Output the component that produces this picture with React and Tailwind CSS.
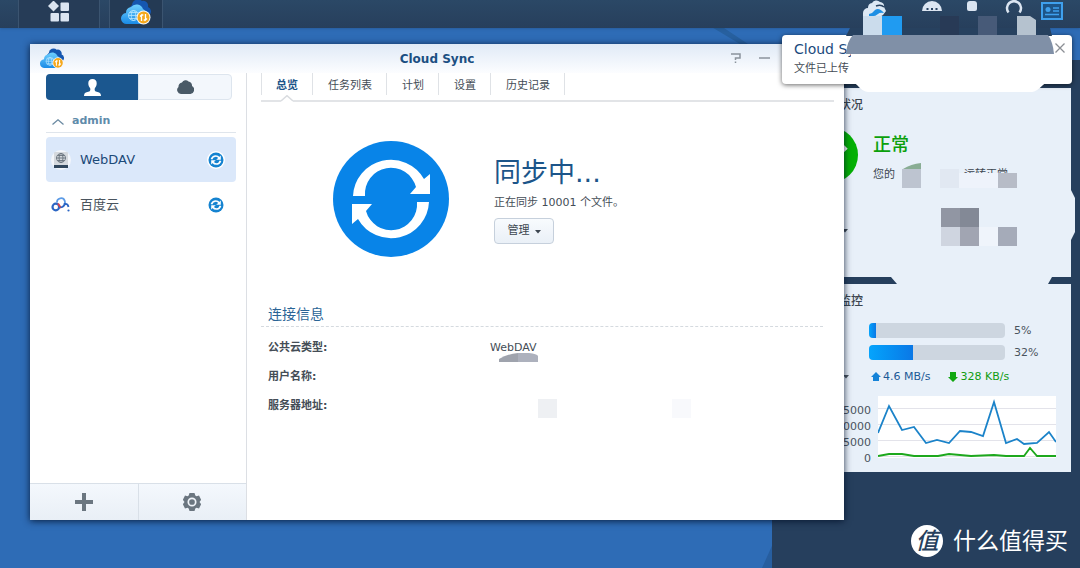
import React, { useState } from 'react';

const tabs = ['总览', '任务列表', '计划', '设置', '历史记录'];

const connections = [
  { id: 'webdav', name: 'WebDAV', icon: 'webdav' },
  { id: 'baidu', name: '百度云', icon: 'baidu' },
];

const usage = [
  { label: 'CPU', value: 5 },
  { label: 'RAM', value: 32 },
];

const uploadPoints = '0,37 11,10 24,34 36,31 48,47 59,44 71,47 82,35 93,36 105,40 116,6 128,47 139,43 146,48 159,47 171,36 178,46';
const downloadPoints = '0,60 11,58 24,58 36,60 60,60 71,58 82,59 93,60 116,59 128,60 146,60 152,52 159,60 178,60';

const CloudSyncIcon = ({ className }) => (
  <svg className={className} viewBox="0 0 30 26" aria-hidden="true">
    <defs>
      <linearGradient id="cloudFront" x1="0" y1="0" x2="0" y2="1">
        <stop offset="0" stopColor="#6fd0ff" />
        <stop offset="1" stopColor="#1a8be6" />
      </linearGradient>
    </defs>
    <path d="M12 15a5 5 0 0 1-1-9 6 6 0 0 1 10-4 5 5 0 0 1 6 6 4.500 4.500 0 0 1 1 8z" fill="#1557b0" />
    <path d="M6 25a5.500 5.500 0 0 1-1-11 6 6 0 0 1 5-6 7 7 0 0 1 12 2 5 5 0 0 1 3 4v11z" fill="url(#cloudFront)" />
    <g fill="none" stroke="#b5e6ff" strokeWidth="0.8">
      <circle cx="12.500" cy="16.500" r="5" />
      <ellipse cx="12.500" cy="16.500" rx="2.200" ry="5" />
      <path d="M7.500 16.500h10M8.500 13.500h8M8.500 19.500h8" />
    </g>
    <circle cx="22.500" cy="18.500" r="7" fill="#f5f7fa" />
    <circle cx="22.500" cy="18.500" r="6" fill="#f5a81c" />
    <path d="M20.500 22v-6l-1.500 1.500M20.500 16h1.800M24.500 15v6l1.500-1.500M24.500 21h-1.800" fill="none" stroke="#fff" strokeWidth="1.300" />
  </svg>
);

const SyncIcon = ({ className }) => (
  <svg className={className} viewBox="0 0 116 116" aria-hidden="true">
    <circle cx="58" cy="58" r="58" fill="#0884e8" />
    <g fill="#fff">
      <path d="M20 55A38 38 0 0 1 91 38L97 33V53H77L83 46A26 26 0 0 0 32 55Z" />
      <path d="M20 55A38 38 0 0 1 91 38L97 33V53H77L83 46A26 26 0 0 0 32 55Z" transform="rotate(180 58 58)" />
    </g>
  </svg>
);

const SyncBadge = () => (
  <svg className="h-[18px] w-[18px]" viewBox="0 0 18 18" aria-hidden="true">
    <circle cx="9" cy="9" r="9" fill="#fff" />
    <circle cx="9" cy="9" r="7.500" fill="#1583d0" />
    <g fill="none" stroke="#fff" strokeWidth="1.700">
      <path d="M4.500 8.300Q5.500 5 8.800 5q2 0 3.200 1.800" />
      <path d="M13.500 9.700Q12.500 13 9.200 13q-2 0-3.200-1.800" />
    </g>
    <path d="M13.800 4.500v4.300H9.200zM4.200 13.500V9.200h4.600z" fill="#fff" />
  </svg>
);

const WebDavIcon = () => (
  <svg className="h-5 w-5" viewBox="0 0 20 20" aria-hidden="true">
    <circle cx="10" cy="10" r="10" fill="#f3f6fb" />
    <rect x="3" y="2" width="14" height="14" rx="1" fill="#d5d9de" />
    <g fill="none" stroke="#68727c" strokeWidth="0.9">
      <circle cx="10" cy="8" r="4.500" />
      <ellipse cx="10" cy="8" rx="2" ry="4.500" />
      <path d="M5.500 8h9M6.500 5.500h7M6.500 10.500h7" />
    </g>
    <rect x="3" y="15" width="14" height="3" fill="#31475d" />
  </svg>
);

const BaiduIcon = () => (
  <svg className="h-5 w-5" viewBox="0 0 20 20" fill="none" aria-hidden="true">
    <path d="M6 7.500a4 4 0 0 1 7.800-1.500q.4 1.500 0 4" stroke="#5c9be6" strokeWidth="1.800" />
    <circle cx="4.800" cy="12" r="3.300" stroke="#2c66c4" strokeWidth="2.200" />
    <path d="M7 8.500l3 4.500" stroke="#d9434e" strokeWidth="1.800" />
    <path d="M9.500 12.500q4-1 4-3.500 3.500-.5 4 3" stroke="#2c66c4" strokeWidth="1.800" />
    <circle cx="17.500" cy="15.500" r="1.100" fill="#2c66c4" />
  </svg>
);

const Caret = ({ className }) => (
  <svg className={className} viewBox="0 0 6 4" fill="currentColor" aria-hidden="true">
    <path d="M0 0h6L3 3.500z" />
  </svg>
);

const Wallpaper = () => (
  <svg className="absolute inset-0 h-full w-full" viewBox="0 0 1080 568" preserveAspectRatio="none" aria-hidden="true">
    <path d="M700 20L740 44H748L712 20Z" fill="#27609f" />
    <path d="M815 450L762 568H1080V450Z" fill="#275e9f" />
  </svg>
);

const Taskbar = () => (
  <header className="absolute inset-x-0 top-0 z-20 flex h-7 justify-between bg-linear-to-b from-[#2b4866] to-[#273f5c] shadow">
    <div className="flex pl-[18px]">
      <button aria-label="主菜单" className="flex w-[82px] justify-center border-x border-[#3b5470] bg-[#263c57] pt-px">
        <svg className="h-[22px] w-[22px]" viewBox="0 0 22 22" fill="#dbe5f1">
          <path d="M5.500-0.500l5.500 5.500-5.500 5.500L0 5z" />
          <rect x="12.500" y="1.500" width="8.500" height="8.500" rx="1" />
          <rect x="2.500" y="12" width="8.500" height="8.500" rx="1" />
          <rect x="12.500" y="12" width="8.500" height="8.500" rx="1" />
        </svg>
      </button>
      <button aria-label="Cloud Sync" className="ml-[9px] flex w-[54px] justify-center border-x border-[#3b5470] bg-[#243a54]">
        <CloudSyncIcon className="-mt-px h-[26px] w-[30px]" />
      </button>
    </div>
    <div className="flex items-start pr-[17px]">
      <svg className="h-7 w-6" viewBox="0 0 24 28" aria-hidden="true">
        <path d="M1 18V13a5 5 0 0 1 5-5 5 5 0 0 1 4-5 5 5 0 0 1 8-1 4 4 0 0 1 4 5l2 4-3 4-5 3z" fill="#dce8f4" />
        <path d="M7 14q4-1 6-4 4-3 9 3-4-1-6 1-3 3-9 2z" fill="#1e8fe4" />
        <path d="M14 6q5-2 8 1" stroke="#27415f" strokeWidth="1.500" fill="none" />
      </svg>
      <svg className="ml-9 h-7 w-5" viewBox="0 0 20 28" aria-hidden="true">
        <path d="M0 11a10 10 0 0 1 20 0z" fill="#dbe5f1" />
        <g fill="#27415f">
          <rect x="4.500" y="8" width="2" height="2" />
          <rect x="9" y="8" width="2" height="2" />
          <rect x="13.500" y="8" width="2" height="2" />
        </g>
      </svg>
      <svg className="ml-[25px] h-7 w-2.5" viewBox="0 0 10 28" aria-hidden="true">
        <path d="M0 9V4a3 3 0 0 1 3-3h4a3 3 0 0 1 3 3v5a2 2 0 0 1-2 2H2a2 2 0 0 1-2-2z" fill="#dbe5f1" />
      </svg>
      <svg className="ml-7 h-7 w-[18px]" viewBox="0 0 18 28" aria-hidden="true">
        <path d="M3.500 12.500a7 7 0 1 1 11 0" fill="none" stroke="#dbe5f1" strokeWidth="2.500" />
      </svg>
      <button aria-label="小工具" className="ml-[18px] mt-0.5">
        <svg className="h-[18px] w-[22px]" viewBox="0 0 22 18" fill="none" stroke="#3fa0ee">
          <rect x="1" y="1" width="20" height="16" fill="#1d5488" strokeWidth="2" />
          <circle cx="7" cy="7.500" r="2.500" fill="#3fa0ee" stroke="none" />
          <path d="M12 6h6M12 9h6M4 12.500h14" strokeWidth="1.500" />
        </svg>
      </button>
    </div>
  </header>
);

const Notification = () => (
  <div className="absolute right-2 top-[35px] z-40 flex w-[290px] justify-between rounded-sm bg-white pl-3 pr-1.5 pt-1 pb-[5px] shadow-[0_1px_5px_rgba(0,0,0,0.6)]">
    <div>
      <div className="text-sm leading-5 text-[#1b4a7d]">Cloud Sync</div>
      <div className="text-[11px] leading-5 text-[#444c55]">文件已上传</div>
    </div>
    <button aria-label="关闭" className="flex h-[18px] w-3 items-center justify-center">
      <svg className="h-2.5 w-2.5" viewBox="0 0 10 10" stroke="#8b8f94" strokeWidth="1.300">
        <path d="M0.500 0.500l9 9M9.500 0.500l-9 9" />
      </svg>
    </button>
    {/* Masked area over the tray and the message */}
    <svg className="absolute -top-[19px] right-[17px] h-[76px] w-[209px]" viewBox="0 0 209 76" aria-hidden="true">
      <path d="M4 12H204L206 20H0Z" fill="#27415f" />
      <rect x="17" width="19" height="20" fill="#cbdcec" />
      <rect x="36" width="20" height="20" fill="#209bf1" />
      <rect x="94" width="19" height="20" fill="#283a56" />
      <rect x="132" width="19" height="20" fill="#475a78" />
      <path d="M171 0H184L190 4V20H171Z" fill="#b5c2cf" />
      <path d="M0 38Q1 25 7 19H202Q207 26 208 38Z" fill="#8090a7" />
      <path d="M5 38H208V60L197 69Q190 76 186 76H22Q17 76 11 69L5 64Z" fill="#fff" />
    </svg>
  </div>
);

const HealthWidget = () => (
  <section className="relative min-h-[189px] bg-[#e8f0f9] text-[#3c4650]">
    <h2 className="h-8 pl-[31px] text-xs font-medium leading-[34px]">系统状况</h2>
    <div className="flex items-start gap-[15px] pl-[18px] pt-[7px]">
      <svg className="h-14 w-14" viewBox="0 0 56 56" aria-hidden="true">
        <circle cx="28" cy="28" r="28" fill="#05b005" />
        <path d="M13 29l10 10 21-19" fill="none" stroke="#fff" strokeWidth="5" />
      </svg>
      <div className="pt-1.5">
        <div className="text-lg font-medium leading-6 text-[#0ba00b]">正常</div>
        <div className="mt-2 flex gap-[69px] text-[11px] leading-5">
          <span>您的</span>
          <span>运转正常</span>
        </div>
      </div>
    </div>
    <Caret className="ml-[58px] mt-11 h-1 w-1.5" />
    {/* Masked host name and uptime */}
    <svg className="absolute left-[117px] top-[75px] h-[84px] w-[117px]" viewBox="0 0 117 84" aria-hidden="true">
      <path d="M2 6Q10 1 20 0V6Z" fill="#89ad94" />
      <rect x="1" y="6" width="19" height="19" fill="#bdc4d0" />
      <rect x="39" y="6" width="19" height="19" fill="#e1e8f2" />
      <rect x="58" y="10" width="39" height="15" fill="#eef3fb" />
      <rect x="97" y="10" width="19" height="15" fill="#b7bcc7" />
      <rect x="40" y="45" width="19" height="19" fill="#9196a3" />
      <rect x="59" y="45" width="19" height="19" fill="#838996" />
      <rect x="40" y="64" width="19" height="19" fill="#cfd5e0" />
      <rect x="59" y="64" width="19" height="19" fill="#a1a5b2" />
      <rect x="78" y="64" width="19" height="19" fill="#eff4fb" />
      <rect x="97" y="64" width="19" height="19" fill="#a5abb9" />
    </svg>
    <svg className="absolute left-[107px] top-[102px] h-[94px] w-[184px]" viewBox="0 0 184 94" aria-hidden="true">
      <path d="M180 0L184 8V42L180 50ZM0 87H161L157 94H6Z" fill="#e8f0f9" />
    </svg>
  </section>
);

const MonitorWidget = () => (
  <section className="bg-[#e8f0f9] pb-[5px] text-[11px] text-[#4a545e]">
    <h2 className="h-8 pl-[31px] text-xs font-medium leading-[34px] text-[#3c4650]">资源监控</h2>
    <div className="flex flex-col gap-[7px] pl-3 pr-[9px] pt-[7px]">
      {usage.map((item) => (
        <div key={item.label} className="flex h-[15px] items-center">
          <span className="w-[73px]">{item.label}</span>
          <div className="h-full flex-1 overflow-hidden rounded-sm bg-[#cdd6e0]">
            <div
              className="h-full bg-linear-to-r from-[#06a4fc] to-[#0b78e6]"
              style={{ width: `${item.value}%` }}
            />
          </div>
          <span className="w-[57px] pl-[9px] pt-0.5">{item.value}%</span>
        </div>
      ))}
    </div>
    <div className="mt-2 flex h-[18px] items-center">
      <div className="flex w-[87px] items-center justify-between pl-3 pr-[22px]">
        <span>LAN</span>
        <Caret className="h-1 w-1.5" />
      </div>
      <div className="flex items-center gap-0.5 text-[#1d5a96]">
        <svg className="h-2.5 w-2.5" viewBox="0 0 10 10" fill="#1583d8" aria-hidden="true">
          <path d="M5 0l5 5H8v4H2V5H0z" />
        </svg>
        <span>4.6 MB/s</span>
      </div>
      <div className="ml-[18px] flex items-center gap-0.5 text-[#119c11]">
        <svg className="h-2.5 w-2.5" viewBox="0 0 10 10" fill="#11a811" aria-hidden="true">
          <path d="M5 10l5-5H8V0H2v5H0z" />
        </svg>
        <span>328 KB/s</span>
      </div>
    </div>
    <div className="mt-2.5 flex pr-[15px]">
      <div className="w-[94px] pr-[7px] pt-[7px] text-right leading-4">
        <div>15000</div>
        <div>10000</div>
        <div>5000</div>
        <div>0</div>
      </div>
      <svg className="h-[62px] flex-1 bg-white" viewBox="0 0 178 62" preserveAspectRatio="none" fill="none">
        <path d="M0 12.500H178M0 28.500H178M0 44.500H178M0 60.500H178" stroke="#e3e3ea" />
        <polyline points={downloadPoints} stroke="#1da81d" strokeWidth="1.800" />
        <polyline points={uploadPoints} stroke="#1b83c9" strokeWidth="1.800" />
      </svg>
    </div>
  </section>
);

const Sidebar = () => {
  const [active, setActive] = useState('webdav');

  return (
    <aside className="flex w-[217px] shrink-0 flex-col border-r border-[#dcdfe4]">
      <div className="mx-4 mr-3.5 mt-px flex h-[26px]">
        <button aria-label="用户" className="flex flex-1 items-center justify-center rounded-l-sm bg-[#1b578f]">
          <svg className="h-[17px] w-[17px]" viewBox="0 0 17 17" fill="#fff">
            <path d="M8.500 0c2.700 0 4.300 1.700 4.200 4.300 0 2-.8 3.700-1.700 4.700-.6.800-.4 2.700.3 3.200 1.500.8 4.800.9 5.400 3 .2.800.3 1.200.3 1.800H0c0-.6.1-1 .3-1.800.6-2.100 3.900-2.200 5.400-3 .7-.5.900-2.400.3-3.200C5.100 8 4.300 6.300 4.300 4.300 4.200 1.700 5.800 0 8.500 0z" />
          </svg>
        </button>
        <button aria-label="云" className="flex flex-1 items-center justify-center rounded-r-sm border border-[#dde5ee] bg-[#f3f7fc]">
          <svg className="h-3.5 w-[17px]" viewBox="0 0 17 14" fill="#4a5a67">
            <path d="M4 14a4 4 0 0 1-2.500-7A4 4 0 0 1 5 2.500 4 4 0 0 1 11.500 1.500 4 4 0 0 1 15 6a4.300 4.300 0 0 1-1.500 8z" />
          </svg>
        </button>
      </div>
      <div className="ml-4 mr-2.5 mt-[9px] flex h-6 items-center gap-2 border-b border-[#dfe5ec] pl-1.5 pt-0.5 text-[11px] font-bold text-[#5f8cab]">
        <svg className="h-1.5 w-3" viewBox="0 0 12 6" fill="none" stroke="#6c8ba3" strokeWidth="1.300">
          <path d="M0.500 5.500L6 0.800l5.500 4.700" />
        </svg>
        admin
      </div>
      <ul className="ml-4 mr-2.5 mt-1 flex-1">
        {connections.map((item) => (
          <li key={item.id}>
            <button
              onClick={() => setActive(item.id)}
              className={`flex h-[45px] w-full items-center rounded-sm pl-[5px] pr-[11px] text-[13px] ${
                active === item.id ? 'bg-[#dbe8fa] text-[#1c4a78]' : 'text-[#4a545e]'
              }`}
            >
              {item.icon === 'webdav' ? <WebDavIcon /> : <BaiduIcon />}
              <span className="ml-[9px] flex-1 pt-px text-left">{item.name}</span>
              <SyncBadge />
            </button>
          </li>
        ))}
      </ul>
      <div className="flex h-[37px] border-t border-[#d9e0e8] bg-linear-to-b from-[#f4f8fd] to-[#e9eff6]">
        <button aria-label="新增" className="flex flex-1 items-center justify-center border-r border-[#d9e0e8]">
          <svg className="h-[18px] w-[18px]" viewBox="0 0 18 18" fill="#6b7680">
            <path d="M7 0h4v7h7v4h-7v7H7v-7H0V7h7z" />
          </svg>
        </button>
        <button aria-label="设置" className="flex flex-1 items-center justify-center">
          <svg className="h-[18px] w-[18px]" viewBox="0 0 18 18">
            <path d="M6.500 0h5l.8 2.500 1.200.7 2.500-.6 2.200 4.200L16.500 9l1.700 2.200-2.200 4.200-2.500-.6-1.200.7-.8 2.500h-5l-.8-2.500-1.200-.7-2.500.6L-.2 11.200 1.500 9-.2 6.800 2 2.600l2.500.6 1.200-.7z" fill="#6b7680" />
            <circle cx="9" cy="9" r="3.700" fill="none" stroke="#f0f4f9" strokeWidth="1.700" />
          </svg>
        </button>
      </div>
    </aside>
  );
};

const Overview = () => (
  <main className="min-w-0 flex-1 pl-3.5 pr-2.5">
    <nav className="relative flex h-[29px] items-start gap-px border-b-2 border-[#e2e4e7] text-[11px] text-[#444d56]">
      {tabs.map((tab, i) => (
        <button
          key={tab}
          className={`h-[22px] border-r border-[#dfe2e6] px-3.5 pt-1 ${
            i === 0 ? 'border-l font-bold text-[#1c5589]' : ''
          }`}
        >
          {tab}
        </button>
      ))}
      <svg className="absolute -bottom-0.5 left-5 h-[7px] w-3" viewBox="0 0 12 7" aria-hidden="true">
        <path d="M0 7V6L6 0.700 12 6V7Z" fill="#fff" />
        <path d="M0 6L6 0.700 12 6" fill="none" stroke="#d9dce0" strokeWidth="1.500" />
      </svg>
    </nav>

    <div className="flex items-center gap-[45px] pl-[72px] pt-[39px]">
      <SyncIcon className="h-[116px] w-[116px] shrink-0" />
      <div>
        <h1 className="text-[27px] leading-9 text-[#1c5589]">同步中...</h1>
        <p className="mt-0.5 text-[11px] leading-5 text-[#444d56]">正在同步 10001 个文件。</p>
        <button className="mt-[5px] flex h-[26px] w-[60px] items-center justify-center gap-[5px] rounded-sm border border-[#c6d0dc] bg-linear-to-b from-[#f8fbfe] to-[#eaf0f7] pt-px text-[11px] text-[#3c4650]">
          管理
          <Caret className="mt-0.5 h-1 w-1.5" />
        </button>
      </div>
    </div>

    <section className="mr-[11px] mt-[47px]">
      <h2 className="border-b border-dashed border-[#d5dadf] pb-0.5 pl-[7px] text-sm leading-5 text-[#2a6496]">
        连接信息
      </h2>
      <dl className="mt-1.5 pl-[7px] text-[11px] leading-[29px] text-[#444d56]">
        <div className="flex">
          <dt className="w-[222px] font-bold">公共云类型:</dt>
          <dd className="relative">
            WebDAV
            <svg className="absolute left-[9px] top-5 h-[9px] w-[39px]" viewBox="0 0 39 9" aria-hidden="true">
              <path d="M0 9V6Q8 1 19 0V9Z" fill="#9fa3ad" />
              <path d="M19 0H30Q38 1 39 3V9H19Z" fill="#adb1bd" />
            </svg>
          </dd>
        </div>
        <div className="flex">
          <dt className="w-[222px] font-bold">用户名称:</dt>
        </div>
        <div className="flex items-center">
          <dt className="w-[222px] font-bold">服务器地址:</dt>
          <dd className="flex gap-[115px] pl-12 pt-1.5">
            <span className="h-[19px] w-[19px] bg-[#eef0f3]" />
            <span className="h-[19px] w-[19px] bg-[#f8f9fc]" />
          </dd>
        </div>
      </dl>
    </section>
  </main>
);

const CloudSyncWindow = () => (
  <div className="absolute bottom-12 left-[30px] right-[236px] top-[44px] z-30 flex flex-col bg-white shadow-[0_1px_7px_rgba(0,15,40,0.85)]">
    <div className="relative flex h-[29px] shrink-0 items-center justify-center bg-linear-to-b from-[#e0eaf6] to-[#fcfdff]">
      <CloudSyncIcon className="absolute left-2.5 top-1 h-[21px] w-6" />
      <h1 className="text-xs font-bold text-[#1b4f82]">Cloud Sync</h1>
      <div className="absolute right-[74px] top-[9px] flex gap-[18px]">
        <button aria-label="帮助">
          <svg className="h-2.5 w-2.5" viewBox="0 0 10 10" fill="none" stroke="#8b939c" strokeWidth="1.500">
            <path d="M0 1h9v4H4.500v2M4.500 8.500V10" />
          </svg>
        </button>
        <button aria-label="最小化">
          <svg className="h-2.5 w-[11px]" viewBox="0 0 11 10" stroke="#8b939c" strokeWidth="1.500">
            <path d="M0 5h11" />
          </svg>
        </button>
      </div>
    </div>
    <div className="flex min-h-0 flex-1">
      <Sidebar />
      <Overview />
    </div>
  </div>
);

const App = () => (
  <div className="relative min-h-screen overflow-hidden bg-[#2e6cb6] font-['DejaVu_Sans','Noto_Sans_CJK_SC',sans-serif]">
    <Wallpaper />
    <Taskbar />
    <div className="absolute bottom-0 right-0 top-[60px] z-10 flex w-[308px] flex-col gap-[7px] bg-[#263f5d] pl-3 pr-[9px] pt-7">
      <HealthWidget />
      <MonitorWidget />
    </div>
    <CloudSyncWindow />
    <Notification />
    <div className="absolute bottom-[11px] right-3 z-20 flex items-center gap-2.5 text-white">
      <span className="flex h-8 w-8 items-center justify-center rounded-full bg-white text-[23px] font-medium italic leading-none text-[#263f5d]">
        值
      </span>
      <span className="text-[23px] leading-8">什么值得买</span>
    </div>
  </div>
);

export default App;
